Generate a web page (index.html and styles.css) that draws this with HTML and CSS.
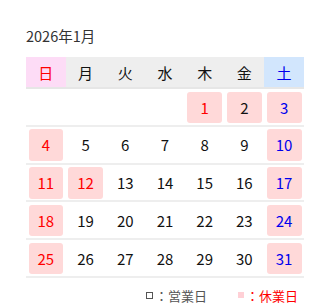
FILE: index.html
```html
<!DOCTYPE html>
<html lang="ja">
<head>
<meta charset="utf-8">
<link rel="stylesheet" href="styles.css">
</head>
<body>
<div class="cal">
  <div class="title">2026年1月</div>
  <table class="grid">
    <thead>
      <tr>
        <th class="sun">日</th><th>月</th><th>火</th><th>水</th><th>木</th><th>金</th><th class="sat">土</th>
      </tr>
    </thead>
    <tbody>
      <tr>
        <td></td><td></td><td></td><td></td>
        <td><div class="d off red">1</div></td>
        <td><div class="d off">2</div></td>
        <td><div class="d off blue">3</div></td>
      </tr>
      <tr>
        <td><div class="d off red">4</div></td>
        <td><div class="d">5</div></td>
        <td><div class="d">6</div></td>
        <td><div class="d">7</div></td>
        <td><div class="d">8</div></td>
        <td><div class="d">9</div></td>
        <td><div class="d off blue">10</div></td>
      </tr>
      <tr>
        <td><div class="d off red">11</div></td>
        <td><div class="d off red">12</div></td>
        <td><div class="d">13</div></td>
        <td><div class="d">14</div></td>
        <td><div class="d">15</div></td>
        <td><div class="d">16</div></td>
        <td><div class="d off blue">17</div></td>
      </tr>
      <tr>
        <td><div class="d off red">18</div></td>
        <td><div class="d">19</div></td>
        <td><div class="d">20</div></td>
        <td><div class="d">21</div></td>
        <td><div class="d">22</div></td>
        <td><div class="d">23</div></td>
        <td><div class="d off blue">24</div></td>
      </tr>
      <tr>
        <td><div class="d off red">25</div></td>
        <td><div class="d">26</div></td>
        <td><div class="d">27</div></td>
        <td><div class="d">28</div></td>
        <td><div class="d">29</div></td>
        <td><div class="d">30</div></td>
        <td><div class="d off blue">31</div></td>
      </tr>
    </tbody>
  </table>
  <div class="legend">
    <span class="item"><span class="sq open"></span>：営業日</span>
    <span class="item closed"><span class="sq shut"></span>：休業日</span>
  </div>
</div>
</body>
</html>
```
FILE: styles.css
```css
html, body {
  margin: 0;
  padding: 0;
  background: #fff;
}
body {
  font-family: "Noto Sans CJK JP", "Noto Sans", sans-serif;
  color: #111;
}
.cal {
  padding: 26px 26px 0 26px;
}
.title {
  font-size: 14.5px;
  line-height: 20px;
  color: #333;
  margin-bottom: 11px;
}
.grid {
  width: 278px;
  border-collapse: collapse;
  table-layout: fixed;
}
.grid th {
  height: 30px;
  padding: 0;
  font-weight: normal;
  font-size: 15px;
  background: #eeeeee;
  border-bottom: 2px solid #e6e6e6;
  color: #111;
}
.grid th.sun {
  background: #fddcf6;
  color: #ff0000;
}
.grid th.sat {
  background: #d2e6fd;
  color: #0000ee;
}
.grid td {
  padding: 2.5px 2.5px 1.8px 2.5px;
  border-bottom: 2px solid #eeeeee;
  text-align: center;
}
.d {
  height: 31.5px;
  line-height: 31.5px;
  font-size: 15px;
  border-radius: 3px;
  color: #111;
}
.d.off {
  background: #ffd9d9;
}
.d.red {
  color: #ff0000;
}
.d.blue {
  color: #0000ee;
}
.legend {
  display: flex;
  justify-content: flex-end;
  gap: 31px;
  padding-right: 6px;
  margin-top: 8px;
  font-size: 13px;
  line-height: 20px;
  color: #555;
}
.item {
  display: flex;
  align-items: center;
}
.closed {
  color: #ff0000;
}
.sq {
  display: inline-block;
  width: 7px;
  height: 7px;
  margin: 0 2px 1px 0;
  box-sizing: border-box;
}
.sq.open {
  border: 1px solid #555;
}
.sq.shut {
  width: 6px;
  height: 6px;
  background: #ffd0d6;
}
```
